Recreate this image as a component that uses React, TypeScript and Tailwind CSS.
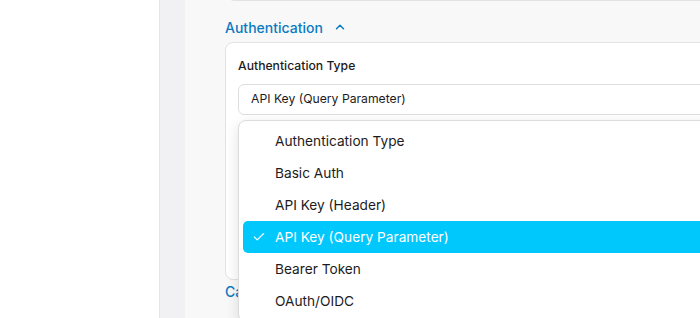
import React from 'react';
import { Check, ChevronUp } from 'lucide-react';

const options = [
  'Authentication Type',
  'Basic Auth',
  'API Key (Header)',
  'API Key (Query Parameter)',
  'Bearer Token',
  'OAuth/OIDC',
];

const selected = 'API Key (Query Parameter)';

export default function App() {
  return (
    <div
      className="relative flex w-[700px] h-[318px] overflow-hidden bg-white"
      style={{ fontFamily: 'Inter, "Noto Sans", "Liberation Sans", sans-serif' }}
    >
      <div className="w-[159px] shrink-0 bg-white" />
      <div className="w-[26px] shrink-0 bg-[#f1f1f4] border-l border-[#e6e6ea]" />

      <main className="flex-1 min-w-0 bg-[#f8f8f8] pl-[40px]">
        <div className="ml-[3px] -mt-[10px] h-[11px] w-[520px] rounded-md border border-[#e2e2e2] bg-[#f8f8f8]" />

        <button className="mt-[17px] flex items-center gap-[10px] h-[18px] text-[14px] font-medium text-[#0a7ac2]">
          Authentication
          <ChevronUp size={14} strokeWidth={2.5} />
        </button>

        <section className="mt-[6px] h-[238px] w-[520px] rounded-lg border border-[#e3e3e3] bg-white pl-[12px] pt-[15px]">
          <label className="block text-[12.2px] font-medium text-[#1c1c1c] leading-[16px]">Authentication Type</label>
          <div className="mt-[10px] flex h-[31px] items-center rounded-md border border-[#dedede] bg-white pl-[12px] text-[12.2px] text-[#1c1c1c]">
            {selected}
          </div>
        </section>

        <div className="mt-[1px] text-[14px] font-medium text-[#0a7ac2]">Capabilities</div>
      </main>

      <div className="absolute left-[238px] top-[120px] w-[500px] rounded-lg border border-[#dcdcdc] bg-white p-[4px] shadow-[0_4px_14px_rgba(0,0,0,0.12)]">
        {options.map((o) => {
          const active = o === selected;
          return (
            <div
              key={o}
              className={`relative flex h-[32px] items-center rounded-[5px] pl-[32px] text-[13.7px] ${
                active ? 'bg-[#00c8fc] text-white' : 'text-[#1c1c1c]'
              }`}
            >
              {active && <Check size={14} strokeWidth={2} className="absolute left-[9px]" />}
              {o}
            </div>
          );
        })}
      </div>
    </div>
  );
}
